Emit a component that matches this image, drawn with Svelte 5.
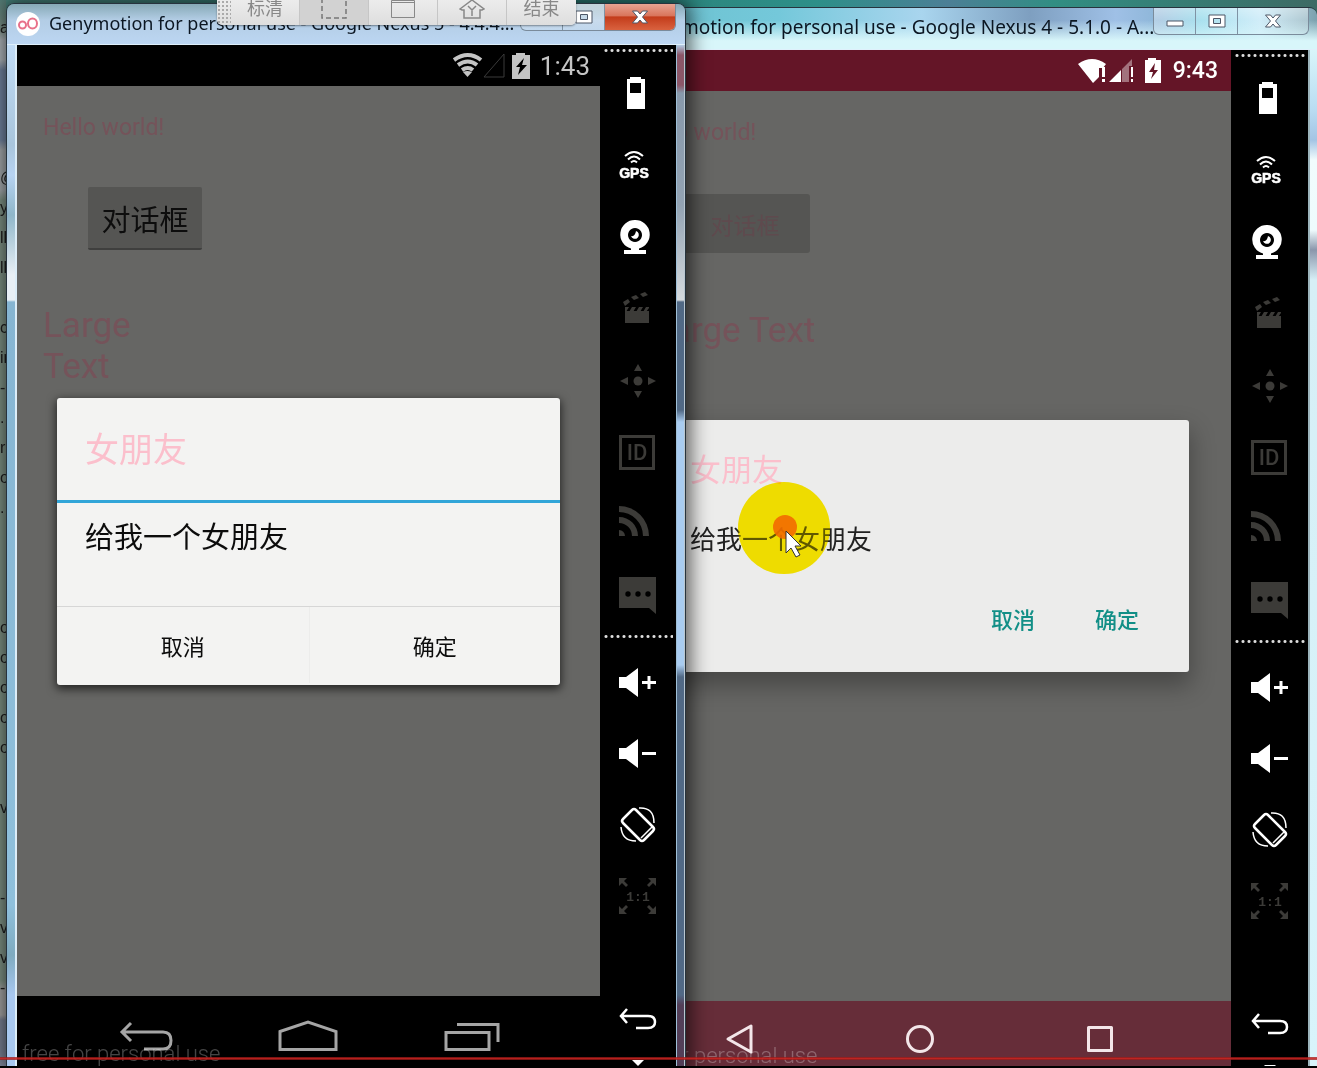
<script>
  const tools = ['battery', 'gps', 'camera', 'capture', 'dpad', 'id', 'network', 'sms'];
  const controls = ['volume up', 'volume down', 'rotate', 'pixel perfect'];
  const dim = ['capture', 'dpad', 'id', 'network', 'sms', 'pixel perfect'];
  const editorLines = 'a\n\n\n\n\n@\ny\nll\nll\n\nc\nin\n-\n.\nr\no\n.\n\n\n\no\no\no\no\no\n\nv\n\n\n-\nv\nv\n-\n\n';
</script>

{#snippet glyph(name)}
  <svg width="76" height="72" viewBox="0 0 76 72" fill="currentColor" aria-hidden="true">
    {#if name === 'battery'}
      <path fill-rule="evenodd" d="M30 20h11v2h4v30H27V22h3zM30 26v10h11V26z" />
    {:else if name === 'gps'}
      <g fill="none" stroke="currentColor" stroke-width="2">
        <path d="M25 27q9-8 18 0M28 30.500q6-6 12 0M31 33.500q3-3 6 0" />
      </g>
      <text x="34" y="49" text-anchor="middle" font-size="14" font-weight="700" stroke="currentColor" stroke-width=".6" font-family="Liberation Sans, sans-serif">GPS</text>
    {:else if name === 'camera'}
      <path fill-rule="evenodd" d="M35 19a14.500 14.500 0 0 1 4 28.500V49h7v4H24v-4h7v-1.500A14.500 14.500 0 0 1 35 19zM35 27a7 7 0 1 0 .01 0z" />
      <path d="M36 30a4 4 0 1 1-5 5q4 1 5-5z" />
    {:else if name === 'capture'}
      <path d="M25 40h24v10H25zM25 34h4l-3 5h-1zM32 34h4l-3 5h-4zM39 34h4l-3 5h-4zM46 34h3v1l-3 4h-3zM25 40v-2h24v2zM23 29l5-3 2 3-5 4zM31 24l5-2 3 3-5 2zM40 21l5-2 3 3-5 2z" />
    {:else if name === 'dpad'}
      <circle cx="38" cy="36" r="4.500" />
      <path d="M34 26l4-7 4 7zM34 46l4 7 4-7zM28 32v8l-8-4zM48 32v8l8-4z" />
    {:else if name === 'id'}
      <path fill="none" stroke="currentColor" stroke-width="3" d="M20.500 19.500h33v32h-33z" />
      <text x="37" y="43" text-anchor="middle" font-size="22" font-weight="500" font-family="Roboto, sans-serif">ID</text>
    {:else if name === 'network'}
      <path d="M19 41a6 6 0 0 1 6 6h-6zM19 28a19 19 0 0 1 19 19h-6a13 13 0 0 0-13-13zM19 17a30 30 0 0 1 30 30h-6a24 24 0 0 0-24-24z" />
    {:else if name === 'sms'}
      <path d="M19 16h37v37l-7-6H19z" />
      <g fill="#000"><circle cx="28" cy="33" r="2.700" /><circle cx="38" cy="33" r="2.700" /><circle cx="48" cy="33" r="2.700" /></g>
    {:else if name === 'volume up' || name === 'volume down'}
      <path d="M19 30h7l12-9v29l-12-9h-7zM42 34h14v3H42z" />
      {#if name === 'volume up'}<path d="M47.500 29h3v13h-3z" />{/if}
    {:else if name === 'rotate'}
      <g fill="none" stroke="currentColor" stroke-width="2.500" stroke-linejoin="round">
        <path d="M32 21q2-2 4 0l17 17q2 2 0 4l-9 9q-2 2-4 0L23 34q-2-2 0-4z" />
        <path stroke-width="1.500" d="M41 49L52 38M39 19q15-1 15 15M21 38q1 14 15 14" />
      </g>
    {:else if name === 'pixel perfect'}
      <path d="M19 18h8l-3 3 4 4-2 2-4-4-3 3zM56 18h-8l3 3-4 4 2 2 4-4 3 3zM19 54h8l-3-3 4-4-2-2-4 4-3-3zM56 54h-8l3-3-4-4 2-2 4 4 3-3z" />
      <text x="38" y="41" text-anchor="middle" font-size="13" font-weight="700" font-family="Liberation Mono, monospace">1:1</text>
    {:else if name === 'back'}
      <path fill="none" stroke="currentColor" stroke-width="2.500" d="M27 26l-6 7 6 7M21 33h27q7 0 7 6t-7 6H36" />
    {/if}
  </svg>
{/snippet}

{#snippet toolbar()}
  <aside class="tools" aria-label="Device tools">
    <div class="dots"></div>
    <div class="group">
      {#each tools as name}
        <button class="tool" class:dim={dim.includes(name)} aria-label={name}>{@render glyph(name)}</button>
      {/each}
    </div>
    <div class="dots"></div>
    <div class="group lower">
      {#each controls as name}
        <button class="tool" class:dim={dim.includes(name)} aria-label={name}>{@render glyph(name)}</button>
      {/each}
    </div>
    <button class="tool" aria-label="back">{@render glyph('back')}</button>
    <svg class="more" width="14" height="6" viewBox="0 0 14 6" aria-hidden="true"><path d="M1 0h12L7 6z" fill="#fff" /></svg>
  </aside>
{/snippet}

{#snippet maxIcon()}
  <svg width="18" height="14" viewBox="0 0 18 14" aria-hidden="true">
    <path fill="#fff" fill-rule="evenodd" stroke="#4c5666" d="M1 1h16v12H1zM5.500 4.500v5h7v-5z" />
  </svg>
{/snippet}

{#snippet closeIcon()}
  <svg width="18" height="14" viewBox="0 0 18 14" aria-hidden="true">
    <path fill="#fff" stroke="#4c5666" d="M1.500 1h5L9 4l2.500-3h5l-5 6 5 6h-5L9 10l-2.500 3h-5l5-6z" />
  </svg>
{/snippet}

<main class="desktop">
  <pre class="editor" aria-hidden="true">{editorLines}</pre>

  <section class="window lollipop">
    <header class="titlebar">
      <h2 class="title">Genymotion for personal use - Google Nexus 4 - 5.1.0 - A...</h2>
      <div class="buttons">
        <button aria-label="Minimize">
          <svg width="18" height="14" viewBox="0 0 18 14" aria-hidden="true"><path d="M1 7h16v5H1z" fill="#fff" stroke="#4c5666" /></svg>
        </button>
        <button aria-label="Maximize">{@render maxIcon()}</button>
        <button class="close" aria-label="Close">{@render closeIcon()}</button>
      </div>
    </header>
    <div class="body">
      <div class="edge left"></div>
      <div class="screen">
        <div class="status">
          <svg width="86" height="28" viewBox="0 0 86 28" fill="#fff" aria-hidden="true">
            <path d="M0 7Q14-3 28 7l-3 4h-4v9l-6 6z" />
            <path d="M24 10h3v10h-3zM24 22h3v3h-3zM31 25l12-12v12zM53 10h2v10h-2zM53 22h2v3h-2z" />
            <path opacity=".4" d="M44 12l10-10v7h-3v16h-7z" />
            <path fill-rule="evenodd" d="M67 3h3V1h8v2h5v23H67zM77 6l-6 9h4l-2 7 7-9h-4z" />
          </svg>
          <span class="clock">9:43</span>
        </div>
        <div class="content">
          <p class="hello">Hello world!</p>
          <button class="open">对话框</button>
          <p class="large">Large Text</p>
          <div class="scrim">
            <div class="dialog" role="dialog" aria-labelledby="title-right">
              <h3 id="title-right">女朋友</h3>
              <p class="message">给我一个女朋友</p>
              <div class="actions"><button>取消</button><button>确定</button></div>
            </div>
          </div>
        </div>
        <nav class="nav">
          <button aria-label="Back"><svg width="30" height="32" viewBox="0 0 30 32" aria-hidden="true"><path d="M26 3v26L3 16z" fill="none" stroke="#f3e6e9" stroke-width="3" stroke-linejoin="round" /></svg></button>
          <button aria-label="Home"><svg width="30" height="30" viewBox="0 0 30 30" aria-hidden="true"><circle cx="15" cy="15" r="12.500" fill="none" stroke="#f3e6e9" stroke-width="3" /></svg></button>
          <button aria-label="Recents"><svg width="30" height="30" viewBox="0 0 30 30" aria-hidden="true"><path d="M3.500 3.500h23v23h-23z" fill="none" stroke="#f3e6e9" stroke-width="3" stroke-linejoin="round" /></svg></button>
          <span class="watermark">free for personal use</span>
        </nav>
      </div>
      {@render toolbar()}
      <div class="edge right"></div>
    </div>
  </section>

  <section class="window kitkat">
    <header class="titlebar">
      <svg class="logo" width="24" height="24" viewBox="0 0 24 24" aria-hidden="true">
        <circle cx="12" cy="12" r="12" fill="#fff" />
        <g fill="none" stroke="#e8718a" stroke-width="2"><circle cx="6.500" cy="13" r="3.500" /><ellipse cx="16.500" cy="11.500" rx="4.500" ry="5" /></g>
      </svg>
      <h2 class="title">Genymotion for personal use - Google Nexus 5 - 4.4.4...</h2>
      <div class="buttons">
        <button aria-label="Minimize"></button>
        <button aria-label="Maximize">{@render maxIcon()}</button>
        <button class="close" aria-label="Close">{@render closeIcon()}</button>
      </div>
    </header>
    <div class="body">
      <div class="edge left"></div>
      <div class="screen">
        <div class="status">
          <svg width="80" height="28" viewBox="0 0 80 28" aria-hidden="true">
            <g fill="none" stroke="#c4c4c4" stroke-width="4"><path d="M2 8q14-10 27 0M6 13q10-7 19 0M10 18q6-4 11 0" /></g>
            <path d="M11 20q4-2 9 0l-4.500 5z" fill="#c4c4c4" />
            <path d="M32 25L52 2v23z" fill="none" stroke="#3a3a3a" />
            <path fill="#c4c4c4" fill-rule="evenodd" d="M60 3h4V1h9v2h5v24H60zM72 6l-8 9h4l-2 8 9-10h-5z" />
          </svg>
          <span class="clock">1:43</span>
        </div>
        <div class="content">
          <p class="hello">Hello world!</p>
          <button class="open">对话框</button>
          <p class="large">Large Text</p>
          <div class="scrim">
            <div class="dialog" role="dialog" aria-labelledby="title-left">
              <h3 id="title-left">女朋友</h3>
              <p class="message">给我一个女朋友</p>
              <div class="actions"><button>取消</button><button>确定</button></div>
            </div>
          </div>
        </div>
        <nav class="nav">
          <button aria-label="Back"><svg width="56" height="32" viewBox="0 0 56 32" aria-hidden="true"><path d="M14 3L5 12l9 9M5 12h41q8 0 8 8.500T46 29H27" fill="none" stroke="#a5a5a5" stroke-width="3" /></svg></button>
          <button aria-label="Home"><svg width="60" height="32" viewBox="0 0 60 32" aria-hidden="true"><path d="M2 11.500L30 2l28 9.500v18H2z" fill="none" stroke="#a5a5a5" stroke-width="3" /></svg></button>
          <button aria-label="Recents"><svg width="58" height="32" viewBox="0 0 58 32" aria-hidden="true"><path d="M3 12.500h43v17H3zM14 4.500h41V22" fill="none" stroke="#a5a5a5" stroke-width="3" /></svg></button>
          <span class="watermark">free for personal use</span>
        </nav>
      </div>
      {@render toolbar()}
      <div class="edge right"></div>
    </div>
  </section>

  <div class="recorder" role="toolbar" aria-label="Recorder">
    <span class="grip"></span>
    <button>标清</button>
    <button class="active" aria-label="Region"><svg width="26" height="20" viewBox="0 0 26 20" aria-hidden="true"><path d="M1 -2v20h24V-2" fill="none" stroke="#777" stroke-width="1.500" stroke-dasharray="5 3" /></svg></button>
    <button aria-label="Window"><svg width="26" height="20" viewBox="0 0 26 20" aria-hidden="true"><path d="M1.500 .5h23v17h-23zM1.500 2.500h23" fill="none" stroke="#888" /></svg></button>
    <button aria-label="Upload"><svg width="26" height="20" viewBox="0 1 26 20" aria-hidden="true"><path d="M1 10L13 1l12 9-2 1h-2v8H5v-8H3zM9 7l4 4 4-4M13 11v6" fill="none" stroke="#888" stroke-width="1.500" /></svg></button>
    <button>结束</button>
  </div>

  <div class="pointer-halo" aria-hidden="true"></div>
  <svg class="pointer" width="92" height="94" viewBox="0 0 92 94" aria-hidden="true">
    <circle cx="46" cy="47" r="46" fill="#f3df00" opacity=".3" />
    <circle cx="47" cy="46" r="12" fill="#f26a00" opacity=".9" />
    <path d="M48 50v22l5-5 5 9 4-2-5-9h6z" fill="#fff" stroke="#333" />
  </svg>
  <div class="record-line"></div>
</main>

<style>
  :global(body) { margin: 0; background: #000; }
  * { box-sizing: border-box; }
  h2, h3, p, pre { margin: 0; font-weight: 400; }
  button { padding: 0; border: 0; background: none; color: inherit; font: inherit; cursor: pointer; }
  svg { display: block; flex: none; }

  .desktop {
    position: relative;
    height: 100vh;
    min-height: 1068px;
    overflow: hidden;
    border-bottom: 2px solid #000;
    background: linear-gradient(90deg, #4d8d85 0, #2c746d 30%, #2d8f88 62%, #4c7f96 72%, #318e83 80%, #3d6a64 100%);
    font-family: Roboto, "Noto Sans CJK SC", sans-serif;
  }
  .editor {
    width: 6px;
    height: 100%;
    padding-top: 13px;
    overflow: hidden;
    font: 16px/30px "Liberation Sans", sans-serif;
    color: #222;
    background: linear-gradient(#58847d 0, #8fa69c 30px, #c3cad0 40px, #c3cad0 60px, #7f93b3 70px, #7f93b3 140px, #b9bec2 150px, #b9bec2 190px, #8da394 200px, #8da394 980px, #b7b7b7 990px, #b7b7b7 1015px, #8790a5 1020px);
  }

  .window { position: absolute; bottom: 0; display: flex; flex-direction: column; border: 1px solid #27333d; border-bottom: 0; border-radius: 8px 8px 0 0; overflow: hidden; }
  .kitkat { top: 3px; left: 6px; right: 631px; box-shadow: 0 0 20px 4px rgba(0, 0, 0, .65); }
  .lollipop { top: 7px; left: 598px; right: 0; border-right: 0; }

  .titlebar { display: flex; align-items: flex-start; flex: none; border-bottom: 1px solid #dff0fb; font-family: "Noto Sans", sans-serif; }
  .kitkat .titlebar { height: 41px; padding-left: 9px; background: linear-gradient(#86a9b6 0, #b3cde5 40%, #bcd6f2 100%); }
  .lollipop .titlebar { height: 42px; padding-left: 36px; padding-right: 8px; background: linear-gradient(rgba(255, 255, 255, 0) 30%, #d8f6fa 80%), linear-gradient(90deg, #6ac0cc 0, #74c8da 25%, #a9d5ee 45%, #7e9fc0 60%, #9fc0e6 72%, #8db6d8 78%, #7fd2e6 84%, #b9e4f6 92%, #7ca1ae 100%); }
  .logo { margin-top: 8px; }
  .title { flex: 1; min-width: 0; white-space: nowrap; overflow: hidden; font-size: 18px; line-height: 38px; color: #0b1622; }
  .lollipop .title { font-size: 19px; }
  .kitkat .title { padding-left: 9px; }
  .buttons { display: flex; flex: none; height: 27px; border: 1px solid #7a8b9b; border-top: 0; border-radius: 0 0 6px 6px; overflow: hidden; }
  .buttons button { width: 42px; display: grid; place-items: center; border-right: 1px solid #7f93a4; background: linear-gradient(rgba(255, 255, 255, .5), rgba(255, 255, 255, .15)); }
  .buttons .close { width: 70px; border-right: 0; }
  .kitkat .buttons { margin-right: 9px; }
  .kitkat .close { background: linear-gradient(#e8a392 0, #d9755c 45%, #c33c1b 50%, #d9623f 100%); }

  .body { display: flex; flex: 1; min-height: 0; }
  .edge { flex: none; }
  .edge.left { width: 10px; border-right: 2px solid #dcedf8; background: linear-gradient(#c0dbf5 0, #a9c5dc 100px, #b7d3f2 130px, #8fb6c9 170px, #e8eff5 230px, #e8eff5 255px, #86b5d2 257px, #8fc0dc 860px, #7fabc0 910px, #a8c8f0 950px, #a8c8f0 100%); }
  .kitkat .edge.right { width: 9px; border-left: 1px solid #9fc0d8; border-right: 1px solid #b9c6cf; background: linear-gradient(#b3cce5 0, #8b5668 10px, #8b5668 40px, #8899ab 48px, #93a3b3 160px, #d5dade 255px, #516985 257px, #516985 365px, #a9ccf0 377px, #a9ccf0 620px, #516985 632px, #516985 950px, #533f58 960px, #533f58 100%); }
  .lollipop .edge.right { width: 9px; border-left: 2px solid #9db5bd; background: linear-gradient(#d8f6fa 0, #b9dcf2 60px, #a3c4e4 90px, #f1fcfd 110px, #eefbfd 180px, #8b96ab 200px, #d6eff6 230px, #d8f4fb 100%); }

  .screen { flex: 1; min-width: 0; display: flex; flex-direction: column; }
  .status { height: 41px; flex: none; display: flex; align-items: center; justify-content: flex-end; }
  .kitkat .status { gap: 8px; padding-right: 10px; background: #000; color: #c4c4c4; font-size: 26px; line-height: 32px; }
  .lollipop .status { gap: 9px; padding-right: 13px; background: #641527; color: #fff; font-size: 23px; font-weight: 500; }
  .content { position: relative; flex: 1; display: flex; flex-direction: column; align-items: flex-start; padding: 29px 26px; background: #666664; color: #75535a; }
  .hello { font-size: 23px; line-height: 26px; }
  .open { margin-left: 45px; background: #555553; }
  .kitkat .open { width: 114px; height: 63px; margin-top: 46px; border-bottom: 2px solid #3f3f3e; border-radius: 2px; color: #0d0d0d; font-size: 29px; }
  .lollipop .open { width: 130px; height: 59px; margin-top: 48px; border-radius: 3px; color: #5f4a4e; font-size: 23px; }
  .large { font-size: 35px; line-height: 41px; margin-top: 55px; }
  .kitkat .large { max-width: 110px; }
  .lollipop .large { margin-top: 57px; margin-left: 18px; }

  .scrim { position: absolute; inset: 0; display: grid; align-items: center; }
  .dialog { display: flex; flex-direction: column; border-radius: 3px; }
  .dialog h3 { color: #fbbfcc; }
  .kitkat .dialog { margin: 0 40px; background: #f3f3f2; box-shadow: 0 3px 10px 1px rgba(0, 0, 0, .65); color: #0c0c0c; }
  .kitkat h3 { height: 105px; padding: 0 28px; border-bottom: 3px solid #31a5d8; font-size: 34px; line-height: 104px; }
  .kitkat .message { height: 103px; padding: 15px 28px; font-size: 29px; line-height: 40px; }
  .kitkat .actions { display: grid; grid-template-columns: 1fr 1fr; height: 79px; padding-bottom: 2px; border-top: 1px solid #d6d6d6; font-size: 22px; }
  .kitkat .actions button + button { border-left: 1px solid #ececeb; }
  .lollipop .dialog { margin: 0 42px; padding: 28px 27px 24px 39px; background: #ececeb; box-shadow: 0 12px 24px 2px rgba(0, 0, 0, .3); color: #212121; }
  .lollipop h3 { font-size: 31px; line-height: 46px; }
  .lollipop .message { margin-top: 26px; font-size: 26px; line-height: 40px; }
  .lollipop .actions { display: flex; justify-content: flex-end; gap: 14px; margin-top: 28px; color: #128f87; font-size: 22px; font-weight: 500; }
  .lollipop .actions button { width: 90px; height: 60px; }

  .nav { position: relative; flex: none; display: grid; justify-content: center; align-items: start; }
  .nav button { display: grid; place-items: center; }
  .kitkat .nav { height: 70px; padding-top: 24px; grid-template-columns: 28% 28% 28%; background: #000; }
  .lollipop .nav { height: 65px; padding-top: 22px; grid-template-columns: 29% 29% 29%; align-items: center; padding-bottom: 11px; background: #662d39; }
  .watermark { position: absolute; left: 5px; bottom: 0; font-size: 22px; line-height: 24px; font-weight: 300; color: rgba(255, 255, 255, .27); white-space: nowrap; }
  .lollipop .watermark { left: 10px; bottom: -2px; }

  .tools { width: 76px; flex: none; display: flex; flex-direction: column; background: #000; color: #fff; overflow: hidden; }
  .lollipop .tools { width: 77px; }
  .dots { flex: none; height: 3px; margin: 4px 3px 5px; background: radial-gradient(circle, #ddd 1px, #000 2px) 0 0 / 6px 3px; }
  .group { display: flex; flex-direction: column; flex: none; margin-bottom: -2px; }
  .group.lower { margin-top: 4px; margin-bottom: 52px; }
  .tool { height: 72px; flex: none; display: grid; place-items: center; overflow: hidden; }
  .lower .tool { height: 71px; }
  .dim { color: #3c3b38; }
  .more { margin: 5px auto 0; }

  .recorder { position: absolute; top: 0; left: 217px; display: flex; height: 25px; overflow: hidden; border-radius: 0 0 5px 5px; background: linear-gradient(#ececec, #dedede); box-shadow: 0 1px 2px rgba(0, 0, 0, .4); color: #888; font: 18px/14px "Noto Sans CJK SC", sans-serif; }
  .recorder button { width: 69px; height: 25px; display: grid; justify-items: center; align-items: start; border-right: 1px solid #c6c6c6; }
  .recorder button:last-child { border-right: 0; }
  .recorder .active { background: #d2d2d2; }
  .grip { width: 14px; background: radial-gradient(circle, #aaa 1px, transparent 1px) 0 0 / 4px 4px; }

  .pointer { position: absolute; left: 738px; top: 481px; }
  .pointer-halo { position: absolute; left: 738px; top: 482px; width: 92px; height: 92px; border-radius: 50%; background: #ffed00; mix-blend-mode: multiply; }
  .record-line { position: absolute; left: 0; right: 0; bottom: 6px; height: 3px; background: linear-gradient(rgba(140, 20, 20, .7), rgba(200, 36, 32, .9), rgba(140, 20, 20, .7)); }
</style>
